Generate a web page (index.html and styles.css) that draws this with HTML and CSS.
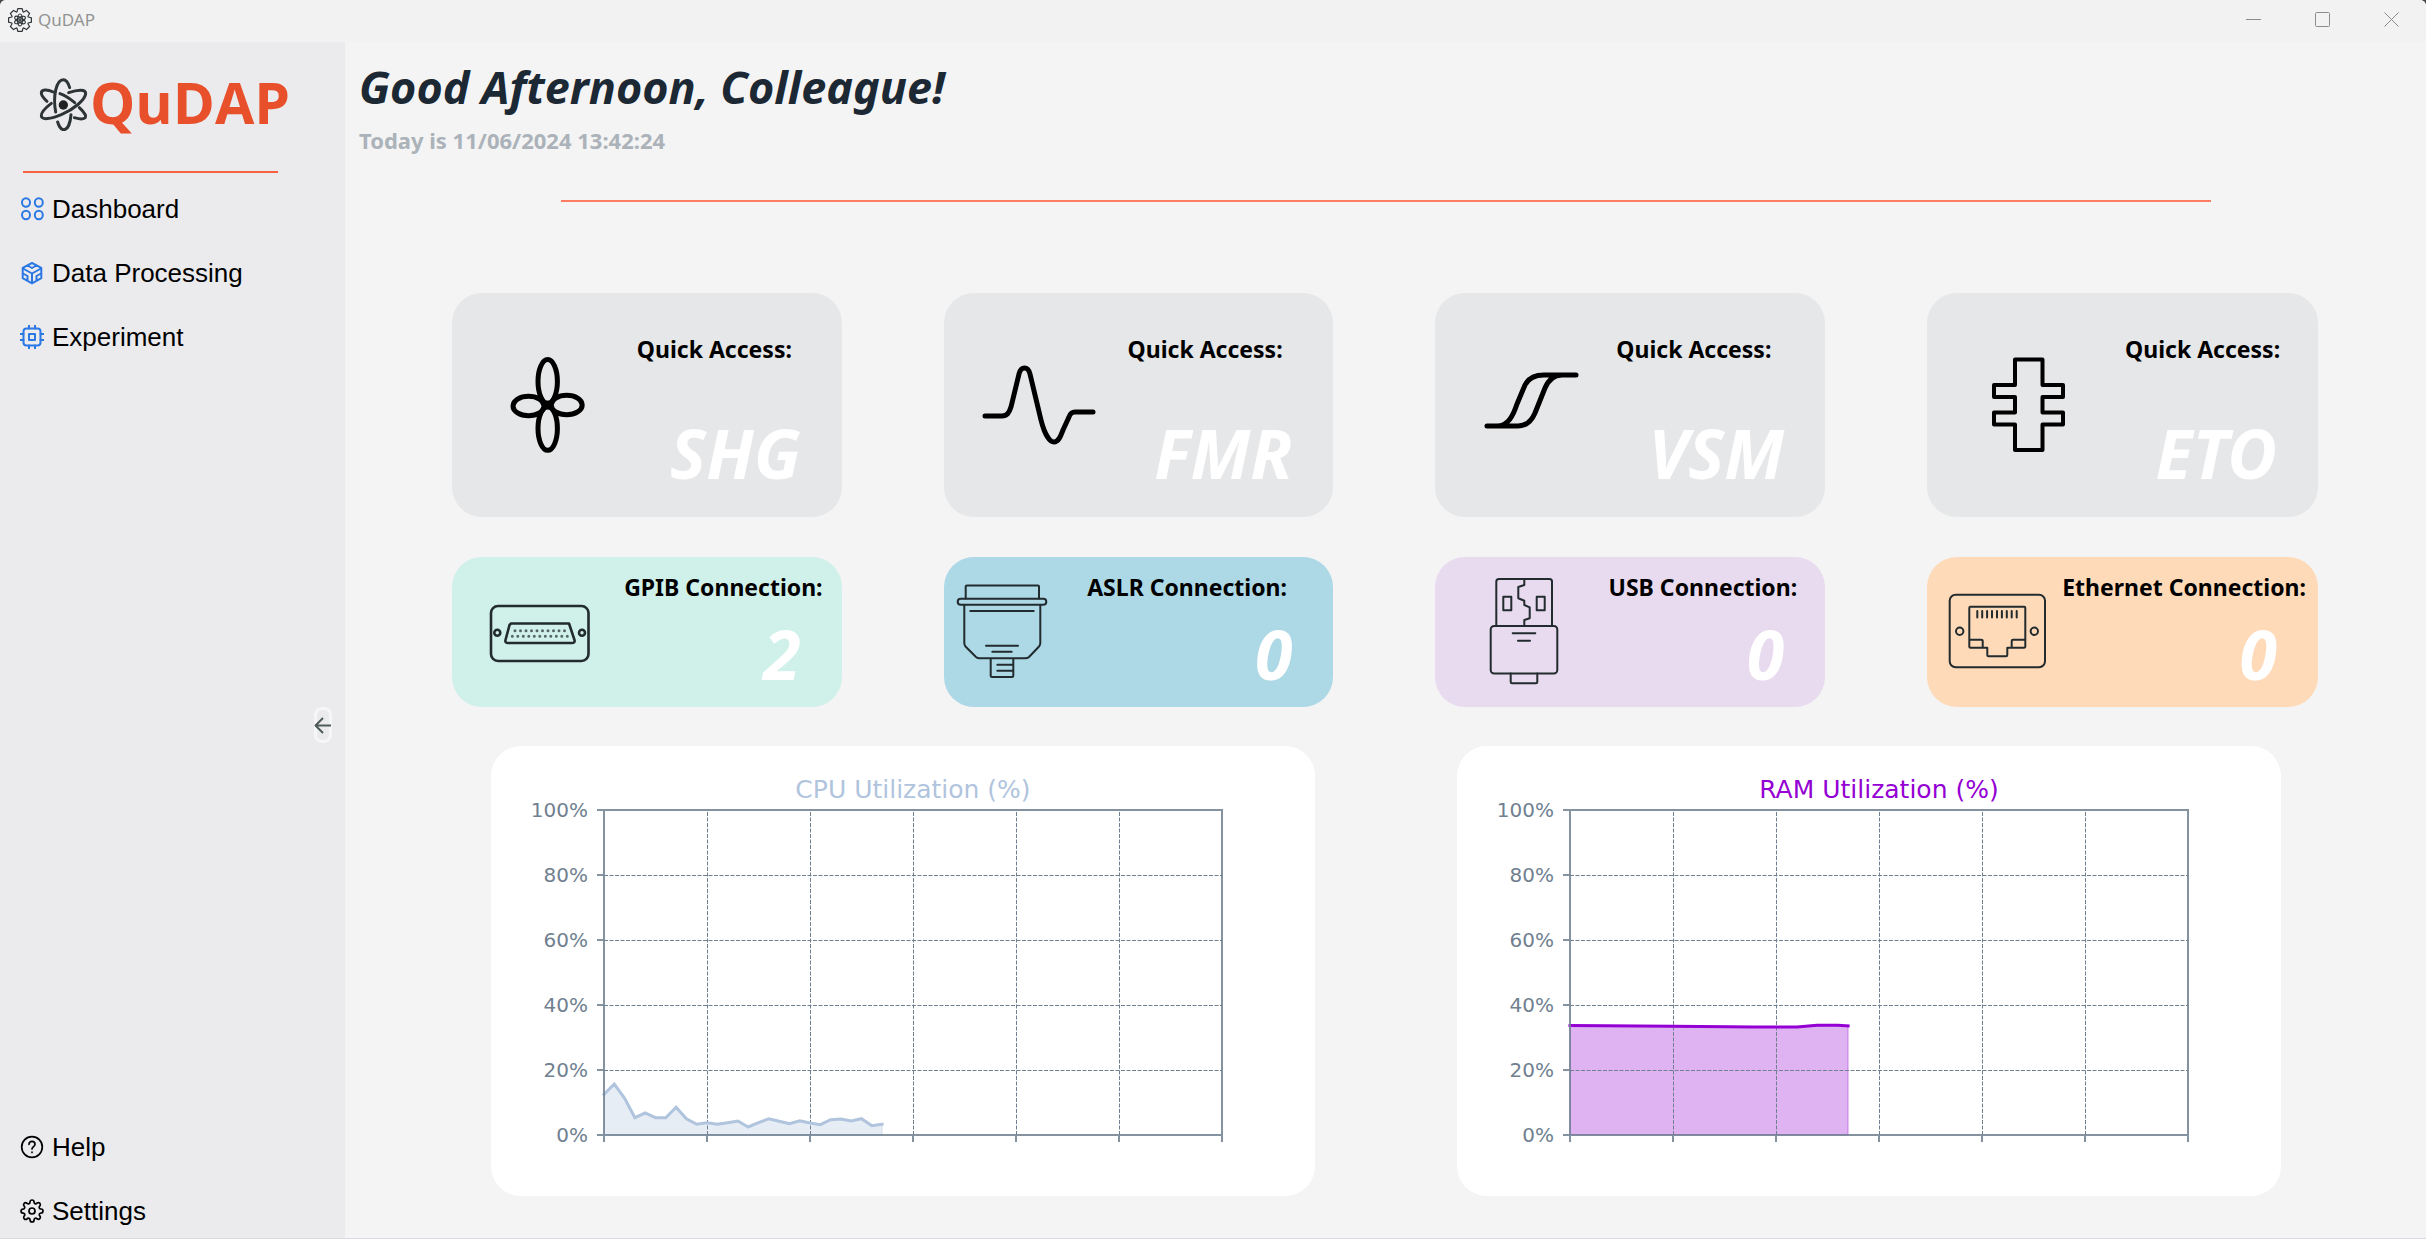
FILE: index.html
```html
<!DOCTYPE html>
<html lang="en">
<head>
<meta charset="utf-8">
<title>QuDAP</title>
<link rel="stylesheet" href="styles.css">
</head>
<body>
<div class="window">
  <header class="titlebar">
    <svg class="app-icon" viewBox="-12 -12 24 24" width="24" height="24" aria-hidden="true">
      <path d="M-3-8.2L-2.2-11.4H2.2L3-8.2L3.7-7.9L6.5-9.6L9.6-6.5L7.9-3.7L8.2-3L11.4-2.2V2.2L8.2 3L7.9 3.7L9.6 6.5L6.5 9.6L3.7 7.9L3 8.2L2.2 11.4H-2.2L-3 8.2L-3.7 7.9L-6.5 9.6L-9.6 6.5L-7.9 3.7L-8.2 3L-11.4 2.2V-2.2L-8.2-3L-7.9-3.7L-9.6-6.5L-6.5-9.6L-3.7-7.9Z"/>
      <ellipse rx="2.4" ry="6"/><ellipse rx="2.4" ry="6" transform="rotate(60)"/><ellipse rx="2.4" ry="6" transform="rotate(120)"/><circle r="1"/>
    </svg>
    <span class="app-name">QuDAP</span>
    <div class="window-controls">
      <button type="button" aria-label="Minimize"><svg viewBox="0 0 15 15" width="15" height="15"><path d="M0 7.500H15"/></svg></button>
      <button type="button" aria-label="Maximize"><svg viewBox="0 0 15 15" width="15" height="15"><rect x=".5" y=".5" width="14" height="14" rx="1"/></svg></button>
      <button type="button" aria-label="Close"><svg viewBox="0 0 15 15" width="15" height="15"><path d="M.5.5l14 14M14.500.5l-14 14"/></svg></button>
    </div>
  </header>

  <div class="workspace">
    <aside class="sidebar">
      <div class="brand">
        <svg class="brand-atom" viewBox="114 221 156 174" width="52" height="58" aria-hidden="true">
          <path d="M167 338C158 290 169 241 190 241C199 241 205 251 209 265"/>
          <path d="M213 346C211 372 203 391 192 391C184 391 177 382 173 368"/>
          <path d="M206 280C235 270 257 270 257 282C257 300 222 330 184 346C152 360 125 362 124 350C123 342 134 327 154 312"/>
          <path d="M160 278C140 269 124 270 124 281C124 288 131 297 141 306"/>
          <path d="M180 283C194 288 210 298 224 310"/>
          <path d="M238 325C252 338 260 350 256 355C251 361 237 359 223 355"/>
          <circle class="nucleus" cx="190" cy="317" r="14"/>
        </svg>
        <span class="brand-name">QuDAP</span>
      </div>
      <hr class="brand-rule">
      <nav class="nav" aria-label="Main">
        <button type="button" class="nav-item">
          <svg class="blue" viewBox="0 0 24 24" width="24" height="24"><ellipse cx="6" cy="5.500" rx="4" ry="4.200"/><ellipse cx="18.800" cy="5.500" rx="4" ry="4.200"/><ellipse cx="6" cy="18" rx="4" ry="4.200"/><ellipse cx="18.800" cy="18" rx="4" ry="4.200"/></svg>
          Dashboard
        </button>
        <button type="button" class="nav-item">
          <svg class="blue" viewBox="0 0 24 24" width="24" height="24"><path d="M12 2L21.300 6.800V17.200L12 22.300L2.700 17.200V6.800ZM12 22V12.500M3 7.500L12 12.500L21 7.500M7.500 4.500L12 7L16.500 4.500M3 12.500L7.500 15V19.500M21 12.500L16.500 15V19.500"/></svg>
          Data Processing
        </button>
        <button type="button" class="nav-item">
          <svg class="blue" viewBox="0 0 24 24" width="24" height="24"><rect x="3.500" y="3.500" width="17" height="17" rx="3"/><rect x="9" y="9" width="6" height="6"/><path d="M9 .5V3.500M15 .5V3.500M9 20.500V23.500M15 20.500V23.500M.5 9H3.500M.5 15H3.500M20.500 9H23.500M20.500 15H23.500"/></svg>
          Experiment
        </button>
      </nav>
      <div class="collapse-row">
        <button type="button" class="collapse" aria-label="Collapse sidebar"><svg viewBox="0 0 17 17" width="17" height="17"><path d="M17 8.500H1.500M9 1L1.500 8.500L9 16"/></svg></button>
      </div>
      <nav class="nav" aria-label="Support">
        <button type="button" class="nav-item">
          <svg viewBox="0 0 24 24" width="24" height="24"><circle cx="12" cy="12" r="10.300"/><path d="M9 9.300A3 3 0 0 1 15 9.300C15 11.500 12 11.700 12 14"/><path d="M12 17v.5"/></svg>
          Help
        </button>
        <button type="button" class="nav-item">
          <svg viewBox="0 0 24 24" width="24" height="24"><circle cx="12" cy="12" r="3"/><path d="M19.400 15a1.650 1.650 0 0 0 .33 1.820l.06.06a2 2 0 0 1 0 2.830 2 2 0 0 1-2.830 0l-.06-.06a1.650 1.650 0 0 0-1.820-.33 1.650 1.650 0 0 0-1 1.510V21a2 2 0 0 1-2 2 2 2 0 0 1-2-2v-.09A1.650 1.650 0 0 0 9 19.400a1.650 1.650 0 0 0-1.820.33l-.06.06a2 2 0 0 1-2.830 0 2 2 0 0 1 0-2.830l.06-.06a1.650 1.650 0 0 0 .33-1.820 1.650 1.650 0 0 0-1.510-1H3a2 2 0 0 1-2-2 2 2 0 0 1 2-2h.09A1.650 1.650 0 0 0 4.600 9a1.650 1.650 0 0 0-.33-1.820l-.06-.06a2 2 0 0 1 0-2.830 2 2 0 0 1 2.830 0l.06.06a1.650 1.650 0 0 0 1.820.33H9a1.650 1.650 0 0 0 1-1.510V3a2 2 0 0 1 2-2 2 2 0 0 1 2 2v.09a1.650 1.650 0 0 0 1 1.510 1.650 1.650 0 0 0 1.820-.33l.06-.06a2 2 0 0 1 2.830 0 2 2 0 0 1 0 2.830l-.06.06a1.650 1.650 0 0 0-.33 1.820V9a1.650 1.650 0 0 0 1.510 1H21a2 2 0 0 1 2 2 2 2 0 0 1-2 2h-.09a1.650 1.650 0 0 0-1.510 1z"/></svg>
          Settings
        </button>
      </nav>
    </aside>

    <main class="main">
      <h1 class="greeting">Good Afternoon, Colleague!</h1>
      <p class="today">Today is 11/06/2024 13:42:24</p>
      <hr class="main-rule">

      <section class="cards">
        <a class="card quick" href="#shg">
          <svg viewBox="0 0 147 224" width="147" height="224" aria-hidden="true"><ellipse cx="95.700" cy="88.500" rx="9.700" ry="22"/><ellipse cx="95.700" cy="135.500" rx="9.700" ry="21.800"/><ellipse cx="76.500" cy="113" rx="15.500" ry="9.700"/><ellipse cx="114.700" cy="112" rx="15.500" ry="9.700"/><circle cx="95.700" cy="112" r="2"/></svg>
          <span class="card-text"><span class="label">Quick Access:</span><span class="value">SHG</span></span>
        </a>
        <a class="card quick" href="#fmr">
          <svg viewBox="0 0 145 224" width="145" height="224" aria-hidden="true"><path d="M41 123H58C63 123 65 120 67 114L75 81C77 73 84 73 86 81L97 127C100 139 105 149 110 149C115 149 117 142 119 137L125 124C126 121 128 119 131 119H149"/></svg>
          <span class="card-text"><span class="label">Quick Access:</span><span class="value">FMR</span></span>
        </a>
        <a class="card quick" href="#vsm">
          <svg viewBox="0 0 139 224" width="139" height="224" aria-hidden="true"><path d="M52 133H62C73 133 78 123 82 111L90 92C94 84 101 82 109 82H141M58 133H83C92 133 97 127 100 120L110 95C113 88 118 82 127 82"/></svg>
          <span class="card-text"><span class="label">Quick Access:</span><span class="value">VSM</span></span>
        </a>
        <a class="card quick" href="#eto">
          <svg viewBox="0 0 172 224" width="172" height="224" aria-hidden="true"><path class="thin" d="M88 66.500H115.500V92H136V104H115.500V119.500H136V131.500H115.500V157H88V131.500H67V119.500H88V104H67V92H88Z"/></svg>
          <span class="card-text"><span class="label">Quick Access:</span><span class="value">ETO</span></span>
        </a>

        <article class="card conn gpib">
          <svg viewBox="0 0 165 150" width="165" height="150" aria-hidden="true"><g class="bold"><rect x="39" y="49" width="97.500" height="55" rx="7"/><path d="M59 66.500H117L122.500 83C123 85 122 86 120 86H56C54 86 53 85 53.500 83L57.500 68Z"/><circle cx="45.300" cy="75.700" r="3"/><circle cx="130" cy="75.700" r="3"/></g><path class="pins" d="M63 73.700H113M60.300 79.300H116"/></svg>
          <div class="card-text"><span class="label">GPIB Connection:</span><span class="value">2</span></div>
        </article>
        <article class="card conn aslr">
          <svg viewBox="0 0 109 150" width="109" height="150" aria-hidden="true"><path d="M21.700 41.500V29.500Q21.700 28.500 23 28.500H94Q95 28.500 95 29.500V41.500"/><rect x="13.700" y="41.800" width="88.600" height="6" rx="3"/><path d="M20.300 48V86Q20.300 88 21.500 89.500L32 100Q33.500 101.300 35.500 101.300H81Q83.500 101.300 85 100L95 89.500Q96.300 88 96.300 86V48M26.300 54H89.700M42 88.700H74M48.300 94.700H67.700M46.700 101.300V119Q46.700 120 48 120H68Q69.300 120 69.300 119V101.300M53.300 107.700H69M53.300 113.700H69"/></svg>
          <div class="card-text"><span class="label">ASLR Connection:</span><span class="value">0</span></div>
        </article>
        <article class="card conn usb">
          <svg viewBox="0 0 157 150" width="157" height="150" aria-hidden="true"><path d="M61.300 69V24.500Q61.300 22 64 22H114.500Q117 22 117 24.500V69"/><rect x="55.700" y="69" width="66.600" height="47.500" rx="3.500"/><path d="M75.700 116.500V125Q75.700 126.300 77 126.300H101Q102.300 126.300 102.300 125V116.500M89.300 22V28L83.300 30V41.300L89.300 43.700V48L94.700 50.300V61.300L89.300 63V69M77.700 76.300H100.300M83 83.700H95"/><rect x="68.300" y="39.700" width="8" height="13.600"/><rect x="101.700" y="39.700" width="8" height="13.600"/></svg>
          <div class="card-text"><span class="label">USB Connection:</span><span class="value">0</span></div>
        </article>
        <article class="card conn ethernet">
          <svg viewBox="0 0 135 150" width="135" height="150" aria-hidden="true"><rect x="22.700" y="37.700" width="95.300" height="72.600" rx="6"/><path d="M43.300 49.700H97.300Q98.300 49.700 98.300 51V89.700Q98.300 90.700 97 90.700H80.300V98Q80.300 99.300 79 99.300H61.500Q60.300 99.300 60.300 98V90.700H43.500Q42.300 90.700 42.300 89.700V51Q42.300 49.700 43.300 49.700ZM42.300 82.700H54Q55.700 82.700 55.700 84V90.700M98.300 82.700H86Q84.700 82.700 84.700 84V90.700"/><circle cx="32.700" cy="74.300" r="3.700"/><circle cx="107.300" cy="74.300" r="3.700"/><path d="M50.300 54V60.500M55.200 54V60.500M60.100 54V60.500M65 54V60.500M70 54V60.500M74.900 54V60.500M79.800 54V60.500M84.700 54V60.500M89.700 54V60.500"/></svg>
          <div class="card-text"><span class="label">Ethernet Connection:</span><span class="value">0</span></div>
        </article>
      </section>

      <section class="charts">
        <figure class="chart cpu">
          <svg viewBox="0 0 824 450" role="img" aria-label="CPU Utilization (%)">
            <text class="chart-title" x="422" y="52">CPU Utilization (%)</text>
            <polygon class="area" points="113,389 113,348.300 123.300,338 133.600,352.300 143.900,371.700 154.200,367 164.500,371.700 174.800,371.700 185.100,361.300 195.400,372.700 205.700,378.300 216,376.700 226.300,378.300 236.600,376.700 246.900,375 257.200,381 267.500,376.700 277.800,372.700 288.100,375.300 298.400,377.700 308.700,374.700 319,377 329.300,378.700 339.600,373.700 349.900,373 360.200,375 370.500,372.700 380.800,379.700 391.100,378.300 391.100,389"/>
            <path class="grid" d="M113 129.500H731M113 194.500H731M113 259.500H731M113 324.500H731M216.500 389V64M319.500 389V64M422.500 389V64M525.500 389V64M628.500 389V64"/>
            <polyline class="line" points="113,348.300 123.300,338 133.600,352.300 143.900,371.700 154.200,367 164.500,371.700 174.800,371.700 185.100,361.300 195.400,372.700 205.700,378.300 216,376.700 226.300,378.300 236.600,376.700 246.900,375 257.200,381 267.500,376.700 277.800,372.700 288.100,375.300 298.400,377.700 308.700,374.700 319,377 329.300,378.700 339.600,373.700 349.900,373 360.200,375 370.500,372.700 380.800,379.700 391.100,378.300"/>
            <path class="axis" d="M113 64H731V389H113ZM106 64H113M106 129H113M106 194H113M106 259H113M106 324H113M106 389H113M113 389V396M216 389V396M319 389V396M422 389V396M525 389V396M628 389V396M731 389V396"/>
            <g class="ticks"><text x="97" y="71">100%</text><text x="97" y="136">80%</text><text x="97" y="201">60%</text><text x="97" y="266">40%</text><text x="97" y="331">20%</text><text x="97" y="396">0%</text></g>
          </svg>
        </figure>
        <figure class="chart ram">
          <svg viewBox="0 0 824 450" role="img" aria-label="RAM Utilization (%)">
            <text class="chart-title" x="422" y="52">RAM Utilization (%)</text>
            <polygon class="area" points="113,389 113,279.500 216,280.300 298,281 340,281 360,279.300 381,279.300 391.100,280 391.100,389"/>
            <path class="grid" d="M113 129.500H731M113 194.500H731M113 259.500H731M113 324.500H731M216.500 389V64M319.500 389V64M422.500 389V64M525.500 389V64M628.500 389V64"/>
            <polyline class="line" points="113,279.500 216,280.300 298,281 340,281 360,279.300 381,279.300 391.100,280"/>
            <path class="axis" d="M113 64H731V389H113ZM106 64H113M106 129H113M106 194H113M106 259H113M106 324H113M106 389H113M113 389V396M216 389V396M319 389V396M422 389V396M525 389V396M628 389V396M731 389V396"/>
            <g class="ticks"><text x="97" y="71">100%</text><text x="97" y="136">80%</text><text x="97" y="201">60%</text><text x="97" y="266">40%</text><text x="97" y="331">20%</text><text x="97" y="396">0%</text></g>
          </svg>
        </figure>
      </section>
    </main>
  </div>
</div>
</body>
</html>
```
FILE: styles.css
```css
* { box-sizing: border-box; }

body {
  margin: 0;
  background: #4a4a4a;
  color: #000;
  font-family: "Noto Sans", "Open Sans", sans-serif;
}

button {
  margin: 0;
  padding: 0;
  border: 0;
  background: none;
  color: inherit;
  font: inherit;
}

svg {
  display: block;
  flex: none;
  fill: none;
  stroke-linecap: round;
  stroke-linejoin: round;
}

.window {
  display: flex;
  flex-direction: column;
  min-height: 100vh;
  overflow: hidden;
  border-bottom: 1px solid #dadae2;
  border-radius: 6px 6px 0 0;
  background: #f4f4f4;
}

/* Title bar */
.titlebar {
  display: flex;
  align-items: center;
  height: 42px;
  padding: 0 0 3px 8px;
  background: #f2f2f2;
}

.app-icon { stroke: #2f3538; stroke-width: 1.2; }

.app-name {
  margin-left: 6px;
  color: #929292;
  font-size: 17px;
  line-height: 24px;
}

.window-controls { display: flex; margin-left: auto; }

.window-controls button {
  display: flex;
  align-items: center;
  justify-content: center;
  width: 69px;
  height: 39px;
}

.window-controls svg { stroke: #8a8c8e; stroke-linecap: butt; }

/* Sidebar */
.workspace { display: flex; flex: 1; }

.sidebar {
  display: flex;
  flex: none;
  flex-direction: column;
  width: 345px;
  padding: 22px 0 7px;
  background: #ebebed;
}

.brand { display: flex; align-items: center; padding-left: 38px; }

.brand-atom { stroke: #2e3436; stroke-width: 9; }
.brand-atom .nucleus { fill: #222; stroke: none; }

.brand-name {
  color: #e84f2b;
  font: 700 57px/76px "Open Sans", sans-serif;
}

.brand-rule {
  width: 255px;
  height: 2px;
  margin: 31px 0 16px 23px;
  border: 0;
  background: #f8613f;
}

.nav { display: flex; flex-direction: column; gap: 24px; }

.nav-item {
  display: flex;
  align-items: center;
  gap: 8px;
  height: 40px;
  padding-left: 20px;
  font: 26px/40px "Liberation Sans", Arial, sans-serif;
}

.nav-item svg { stroke: #000; stroke-width: 1.7; }
.nav-item .blue { stroke: #2b78e4; stroke-width: 2; }

.collapse-row {
  display: flex;
  flex: 1;
  align-items: center;
  justify-content: flex-end;
  padding: 0 13px 34px 0;
}

.collapse {
  display: flex;
  align-items: center;
  width: 18px;
  height: 36px;
  border-radius: 8px;
  box-shadow: inset 0 0 0 3px #f6f6f6;
}

.collapse svg { stroke: #505a5a; stroke-width: 2; stroke-linecap: butt; }

/* Main column */
.main { flex: 1; min-width: 0; padding: 15px 0 42px; }

.greeting {
  margin: 0 14px 8px;
  color: #1c2833;
  font-size: 45px;
  font-style: italic;
  line-height: 60px;
}

.today {
  margin: 0 14px;
  color: #abb2b9;
  font-size: 22px;
  font-weight: 700;
  line-height: 30px;
}

.main-rule {
  height: 2px;
  margin: 45px 215px 91px 216px;
  border: 0;
  background: #fc7d63;
}

.cards {
  display: grid;
  grid-template-columns: repeat(4, 1fr);
  gap: 40px 102px;
  margin: 0 108px 0 107px;
}

.card {
  display: flex;
  align-items: flex-start;
  border-radius: 30px;
  color: #000;
  text-decoration: none;
}

.card > svg { overflow: visible; }

.card-text {
  display: flex;
  flex: 1;
  flex-direction: column;
  align-items: center;
  margin-right: 12px;
}

.label {
  font-size: 23px;
  font-weight: 700;
  line-height: 30px;
  white-space: nowrap;
}

.value {
  align-self: flex-end;
  margin-right: 29px;
  color: #fff;
  font-size: 68px;
  font-style: italic;
  font-weight: 700;
  line-height: 80px;
}

.quick { background: #e6e7e9; }
.quick svg { stroke: #000; stroke-width: 5; }
.quick .thin { stroke-width: 4; }
.quick .card-text { gap: 49px; padding: 41px 0 24px; }

.conn svg { stroke: #222b2e; stroke-width: 2; }
.conn .bold { stroke-width: 2.600; }
.conn .pins { stroke-width: 3; stroke-dasharray: 0 5.500; opacity: .7; }
.conn .card-text { gap: 12px; padding: 15px 0 13px; }

.gpib { background: #d0f1ea; }
.aslr { background: #add8e6; }
.usb { background: #e8daef; }
.ethernet { background: #ffdab9; }

/* Charts */
.charts {
  display: grid;
  grid-template-columns: 1fr 1fr;
  gap: 142px;
  margin: 39px 145px 0 146px;
}

.chart {
  margin: 0;
  border-radius: 30px;
  background: #fff;
}

.chart svg { width: 100%; height: auto; stroke-linecap: butt; stroke-linejoin: miter; }

.chart text { font-family: "DejaVu Sans", sans-serif; stroke: none; }
.chart-title { font-size: 25px; text-anchor: middle; }
.ticks { fill: #708090; font-size: 20px; text-anchor: end; }
.axis { stroke: #708090; stroke-width: 2; opacity: .85; }
.grid { stroke: #708090; stroke-width: 1; stroke-dasharray: 4 1.500; }
.line { stroke-width: 3; stroke-linecap: square; }
.area { fill-opacity: .3; stroke-opacity: .2; stroke-width: 2; }

.cpu .chart-title { fill: #b0c4de; }
.cpu .line { stroke: #b0c4de; }
.cpu .area { fill: #b0c4de; stroke: #b0c4de; }

.ram .chart-title { fill: #9400d3; }
.ram .line { stroke: #9400d3; }
.ram .area { fill: #9400d3; stroke: #9400d3; }
```
